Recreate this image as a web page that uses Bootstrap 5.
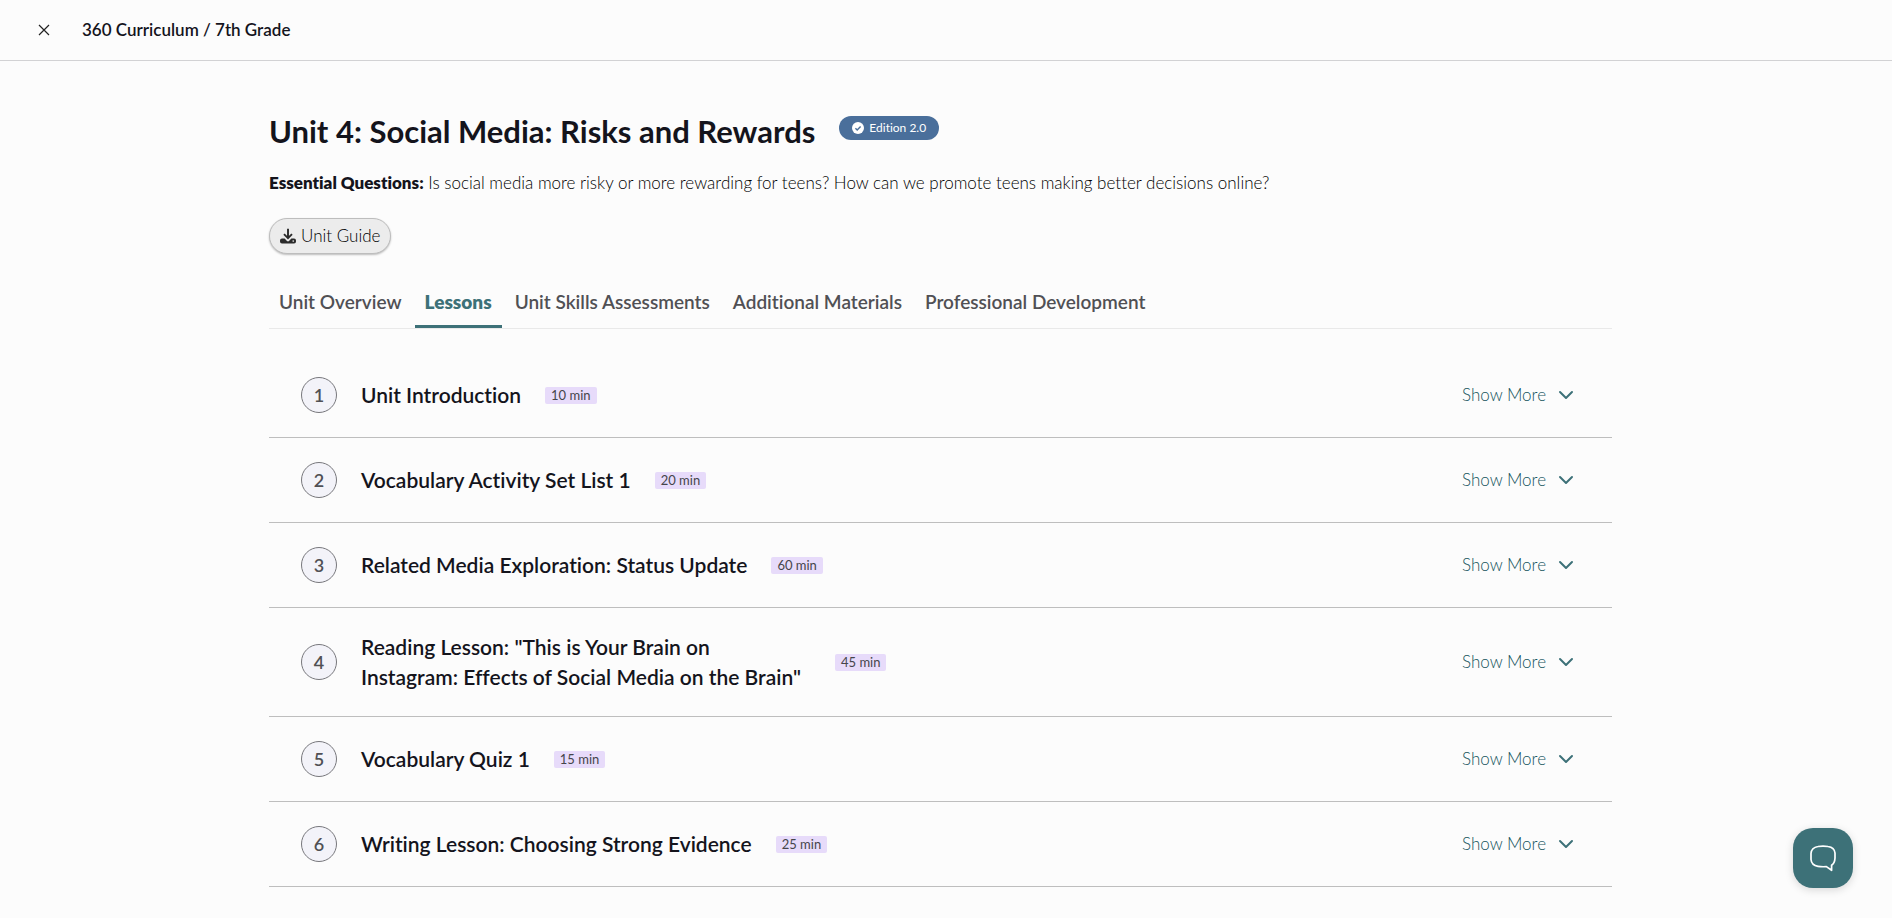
<!DOCTYPE html>
<html lang="en">
<head>
<meta charset="utf-8">
<meta name="viewport" content="width=device-width, initial-scale=1">
<title>360 Curriculum / 7th Grade</title>
<link href="https://cdn.jsdelivr.net/npm/bootstrap@5.3.0/dist/css/bootstrap.min.css" rel="stylesheet">
<style>
  :root { --teal: #3d7178; --ink: #14141c; }
  html { scrollbar-width: none; }
  body { font-family: Lato, "Liberation Sans", sans-serif; font-size: 17px; line-height: 24px; font-variant-ligatures: no-common-ligatures; color: #222226; background: #fcfcfc; }
  .topbar { min-height: 61px; border-bottom: 1px solid #d2d2d4; padding: 0 36px; gap: 30px; color: var(--ink); }
  .topbar-title { font-size: 17px; font-weight: 600; }
  .close-btn { line-height: 0; color: #222; }
  .page-body { padding-right: 11px; }
  .unit { max-width: 1343px; padding-top: 48px; }
  .unit-head { gap: 24px; }
  .unit-title { font-size: 31px; line-height: 44px; font-weight: 700; color: var(--ink); }
  .edition { background: #4a6f9b; height: 24px; margin-top: 7px; padding: 0 13px; gap: 5px; font-size: 12px; line-height: 24px; font-weight: 400; }
  .questions { margin: 18px 0 23px; font-weight: 300; color: #000; }
  .questions strong { font-weight: 800; color: var(--ink); }
  .guide-btn { height: 36px; padding: 0 10px; gap: 5px; color: #000; font-size: 17px; line-height: 24px; font-weight: 300; background: #ececec; border: 1px solid #bdbdbd; box-shadow: 0 1px 2px rgba(0, 0, 0, .25); }
  .unit-tabs { margin-top: 24px; border-bottom: 1px solid #e9e9e9; gap: 3px; --bs-nav-link-color: #505054; --bs-nav-link-hover-color: #3d7178; }
  .unit-tabs .nav-link { padding: 12px 10px 11px; font-size: 19px; line-height: 24px; font-weight: 600; border-bottom: 3px solid transparent; }
  .unit-tabs .nav-link.active { color: var(--teal); font-weight: 800; border-bottom-color: var(--teal); }
  .lesson-list { margin-top: 24px; }
  .lesson { padding: 24px 32px; gap: 24px; border-bottom: 1px solid #bebebe; }
  .num { width: 36px; height: 36px; border: 1px solid #77777c; background: #f3f3f9; color: #505054; font-size: 18px; font-weight: 600; }
  .lesson-title { max-width: 450px; font-size: 21px; line-height: 30px; font-weight: 600; color: var(--ink); }
  .mins { background: #e7dbfa; color: #45454a; font-size: 13px; line-height: 17px; padding: 0 6px; border-radius: 2px; }
  .more-btn { color: #14545d; font-size: 17px; line-height: 24px; gap: 12px; padding: 0 6px 0 0; font-weight: 300; }
  .more-btn svg { color: var(--teal); }
  .chat-btn { right: 39px; bottom: 30px; width: 60px; height: 60px; border-radius: 20px; background: var(--teal); box-shadow: 0 2px 8px rgba(0, 0, 0, .15); }
  .chat-btn:hover { background: #315c62; }
</style>
</head>
<body>
<svg class="d-none" aria-hidden="true">
  <symbol id="chevron" viewBox="0 0 16 16"><path d="M2 5l6 6 6-6" fill="none" stroke="currentColor" stroke-width="2" stroke-linecap="round" stroke-linejoin="round"/></symbol>
</svg>

<header class="topbar d-flex align-items-center">
  <button type="button" class="close-btn btn border-0 p-0" aria-label="Close">
    <svg width="16" height="16" viewBox="0 0 16 16" fill="none" stroke="currentColor" stroke-width="1.2"><path d="M3 3l10 10M13 3L3 13"/></svg>
  </button>
  <div class="topbar-title">360 Curriculum / 7th Grade</div>
</header>

<main class="page-body">
  <div class="unit mx-auto">
    <div class="unit-head d-flex align-items-start">
      <h1 class="unit-title mb-0">Unit 4: Social Media: Risks and Rewards</h1>
      <span class="edition badge rounded-pill d-inline-flex align-items-center">
        <svg width="12" height="12" viewBox="0 0 12 12" aria-hidden="true"><circle cx="6" cy="6" r="6" fill="#fff"/><path d="M3.4 6.2l1.8 1.8 3.4-3.6" fill="none" stroke="#4a6f9b" stroke-width="1.4"/></svg>
        Edition 2.0
      </span>
    </div>
    <p class="questions"><strong>Essential Questions:</strong> Is social media more risky or more rewarding for teens? How can we promote teens making better decisions online?</p>
    <button type="button" class="guide-btn btn rounded-pill d-flex align-items-center">
      <svg width="16" height="16" viewBox="0 0 16 16" aria-hidden="true"><path d="M8 .8v9M4 6.2l4 4 4-4" fill="none" stroke="#2b2b2b" stroke-width="1.9"/><path fill="#2b2b2b" fill-rule="evenodd" d="M2 10.6h2.6L7 13a1.5 1.5 0 0 0 2 0l2.400-2.400H14a2 2 0 0 1 2 2v1a2 2 0 0 1-2 2H2a2 2 0 0 1-2-2v-1a2 2 0 0 1 2-2zM13.200 12.300a.8.8 0 1 0 0 1.600.8.8 0 0 0 0-1.600z"/></svg>
      Unit Guide
    </button>

    <nav class="unit-tabs nav" aria-label="Unit sections">
      <a class="nav-link" href="#overview">Unit Overview</a>
      <a class="nav-link active" aria-current="page" href="#lessons">Lessons</a>
      <a class="nav-link" href="#assessments">Unit Skills Assessments</a>
      <a class="nav-link" href="#materials">Additional Materials</a>
      <a class="nav-link" href="#development">Professional Development</a>
    </nav>

    <section class="lesson-list" id="lessons">
      <div class="lesson d-flex align-items-center">
        <span class="num rounded-circle d-flex align-items-center justify-content-center flex-shrink-0">1</span>
        <h2 class="lesson-title mb-0">Unit Introduction</h2>
        <span class="mins">10 min</span>
        <button type="button" class="more-btn btn border-0 ms-auto d-flex align-items-center">Show More <svg width="16" height="16" aria-hidden="true"><use href="#chevron"/></svg></button>
      </div>
      <div class="lesson d-flex align-items-center">
        <span class="num rounded-circle d-flex align-items-center justify-content-center flex-shrink-0">2</span>
        <h2 class="lesson-title mb-0">Vocabulary Activity Set List 1</h2>
        <span class="mins">20 min</span>
        <button type="button" class="more-btn btn border-0 ms-auto d-flex align-items-center">Show More <svg width="16" height="16" aria-hidden="true"><use href="#chevron"/></svg></button>
      </div>
      <div class="lesson d-flex align-items-center">
        <span class="num rounded-circle d-flex align-items-center justify-content-center flex-shrink-0">3</span>
        <h2 class="lesson-title mb-0">Related Media Exploration: Status Update</h2>
        <span class="mins">60 min</span>
        <button type="button" class="more-btn btn border-0 ms-auto d-flex align-items-center">Show More <svg width="16" height="16" aria-hidden="true"><use href="#chevron"/></svg></button>
      </div>
      <div class="lesson d-flex align-items-center">
        <span class="num rounded-circle d-flex align-items-center justify-content-center flex-shrink-0">4</span>
        <h2 class="lesson-title mb-0">Reading Lesson: "This is Your Brain on Instagram: Effects of Social Media on the Brain"</h2>
        <span class="mins">45 min</span>
        <button type="button" class="more-btn btn border-0 ms-auto d-flex align-items-center">Show More <svg width="16" height="16" aria-hidden="true"><use href="#chevron"/></svg></button>
      </div>
      <div class="lesson d-flex align-items-center">
        <span class="num rounded-circle d-flex align-items-center justify-content-center flex-shrink-0">5</span>
        <h2 class="lesson-title mb-0">Vocabulary Quiz 1</h2>
        <span class="mins">15 min</span>
        <button type="button" class="more-btn btn border-0 ms-auto d-flex align-items-center">Show More <svg width="16" height="16" aria-hidden="true"><use href="#chevron"/></svg></button>
      </div>
      <div class="lesson d-flex align-items-center">
        <span class="num rounded-circle d-flex align-items-center justify-content-center flex-shrink-0">6</span>
        <h2 class="lesson-title mb-0">Writing Lesson: Choosing Strong Evidence</h2>
        <span class="mins">25 min</span>
        <button type="button" class="more-btn btn border-0 ms-auto d-flex align-items-center">Show More <svg width="16" height="16" aria-hidden="true"><use href="#chevron"/></svg></button>
      </div>
    </section>
  </div>
</main>

<button type="button" class="chat-btn btn border-0 p-0 position-fixed d-flex align-items-center justify-content-center" aria-label="Open chat">
  <svg width="28" height="28" viewBox="0 0 28 28" fill="none" stroke="#fff" stroke-width="1.7" stroke-linejoin="round" aria-hidden="true"><path d="M9 2.500Q14 1.600 19 2.500Q25.500 3.500 26 9V14Q25.800 19 22.600 21.300V26.300L17.400 22.600Q13 23 9 22.300Q2.500 21.300 2 15.500V9.500Q2.500 3.500 9 2.500Z"/></svg>
</button>

<script src="https://cdn.jsdelivr.net/npm/bootstrap@5.3.0/dist/js/bootstrap.bundle.min.js"></script>
</body>
</html>
